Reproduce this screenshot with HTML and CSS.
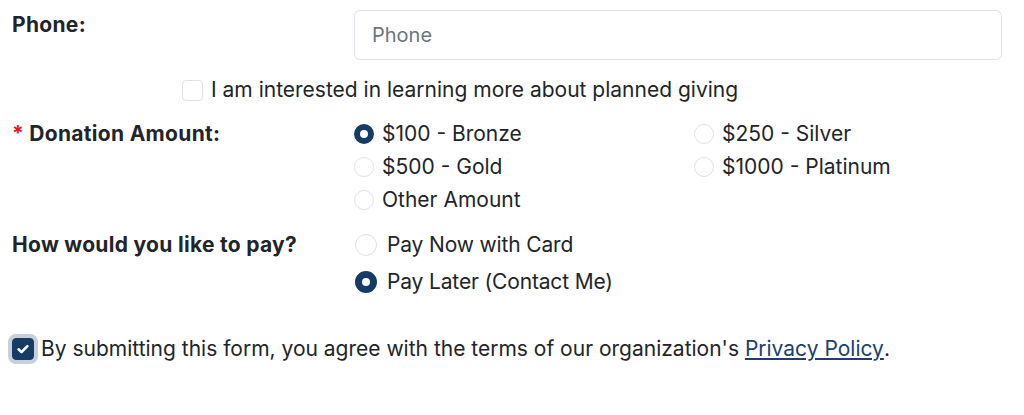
FILE: index.html
```html
<!DOCTYPE html>
<html lang="en">
<head>
    <meta charset="UTF-8">
    <meta name="viewport" content="width=device-width, initial-scale=1.0">
    <title>Donation Form</title>
    <link rel="stylesheet" href="styles.css">
</head>
<body>

    <form class="donate-form">
        <div class="form-row phone-row">
            <label class="field-label" for="phone">Phone:</label>
            <input class="text-input" type="tel" id="phone" placeholder="Phone">
        </div>

        <label class="check-line planned">
            <span class="box"></span>
            I am interested in learning more about planned giving
        </label>

        <div class="form-row amount-row">
            <div class="field-label"><span class="req">*</span> Donation Amount:</div>
            <div class="amount-options">
                <label class="radio-line"><span class="dot checked"></span>$100 - Bronze</label>
                <label class="radio-line"><span class="dot"></span>$250 - Silver</label>
                <label class="radio-line"><span class="dot"></span>$500 - Gold</label>
                <label class="radio-line"><span class="dot"></span>$1000 - Platinum</label>
                <label class="radio-line"><span class="dot"></span>Other Amount</label>
            </div>
        </div>

        <div class="form-row pay-row">
            <div class="field-label">How would you like to pay?</div>
            <div class="pay-options">
                <label class="radio-line"><span class="dot"></span>Pay Now with Card</label>
                <label class="radio-line"><span class="dot checked"></span>Pay Later (Contact Me)</label>
            </div>
        </div>

        <label class="check-line agree">
            <span class="box checked focused">
                <svg width="14" height="14" viewBox="0 0 14 14"><path d="M2.6 7.3l2.9 2.8L11.4 4.2" fill="none" stroke="#fff" stroke-width="2.6" stroke-linecap="round" stroke-linejoin="round"/></svg>
            </span>
            By submitting this form, you agree with the terms of our organization's&nbsp;<a href="#">Privacy Policy</a>.
        </label>
    </form>

</body>
</html>
```

FILE: styles.css
```css
* {
    margin: 0;
    padding: 0;
    box-sizing: border-box;
}

body {
    font-family: "Inter", "Noto Sans", sans-serif;
    font-size: 21px;
    color: #212529;
    background: #fff;
}

.donate-form {
    padding: 10px 22px 0 12px;
}

.form-row {
    display: grid;
    grid-template-columns: 342px 1fr;
}

.field-label {
    font-weight: 700;
    line-height: 30px;
    letter-spacing: 0.3px;
}

.req {
    color: #e4162b;
}

.text-input {
    height: 50px;
    width: 100%;
    border: 1px solid #dee2e6;
    border-radius: 6px;
    padding: 0 17px;
    font-family: inherit;
    font-size: 20px;
    color: #212529;
}

.text-input::placeholder {
    color: #6c757d;
}

.check-line {
    display: flex;
    align-items: center;
    line-height: 30px;
}

.planned {
    margin: 15px 0 0 170px;
}

.box {
    width: 21px;
    height: 21px;
    border: 1px solid #dee2e6;
    border-radius: 4px;
    margin-right: 8px;
    flex-shrink: 0;
    display: flex;
    align-items: center;
    justify-content: center;
}

.box.checked {
    width: 22px;
    height: 22px;
    background: #173b65;
    border-color: #173b65;
    margin-right: 7px;
}

.box.focused {
    box-shadow: 0 0 0 4px #c6cfdb;
}

.amount-row {
    margin-top: 12px;
}

.amount-row .field-label {
    line-height: 33px;
}

.amount-options {
    display: grid;
    grid-template-columns: 340px 1fr;
}

.radio-line {
    display: flex;
    align-items: center;
    line-height: 33px;
}

.dot {
    width: 20px;
    height: 20px;
    border-radius: 50%;
    border: 1px solid #dee2e6;
    background: #fff;
    margin-right: 8px;
    flex-shrink: 0;
}

.dot.checked {
    border: 6px solid #173b65;
}

.pay-row {
    margin-top: 10px;
}

.pay-row .field-label {
    line-height: 37px;
}

.pay-options .radio-line {
    line-height: 37px;
    padding-left: 1px;
    letter-spacing: -0.15px;
}

.pay-options .dot {
    width: 22px;
    height: 22px;
    margin-right: 10px;
}

.pay-options .dot.checked {
    border-width: 7px;
}

.agree {
    margin-top: 34px;
}

.agree a {
    color: #1c3f6e;
    text-decoration: underline;
    text-underline-offset: 2px;
}
```
